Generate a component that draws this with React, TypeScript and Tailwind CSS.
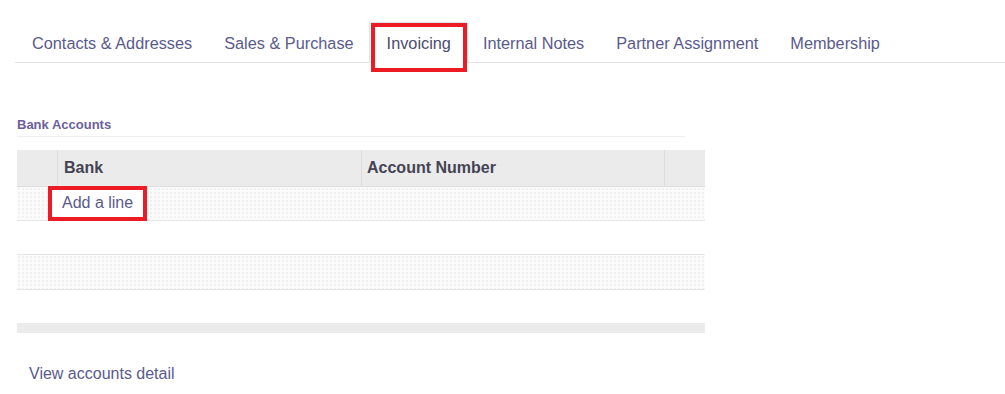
import React from 'react';

const tabs = ['Contacts & Addresses', 'Sales & Purchase', 'Invoicing', 'Internal Notes', 'Partner Assignment', 'Membership'];

const stripe = 'bg-[#fbfbfb] bg-[radial-gradient(#f0f0f0_0.8px,transparent_0.9px)] bg-[length:4px_4px]';

const App: React.FC = () => {
  return (
    <div className="w-[1005px] h-[394px] bg-white font-['Liberation_Sans',Arial,sans-serif] overflow-hidden">
      <div className="pt-[22px] pl-[15px]">
        <div className="flex border-b border-[#dee2e6] h-[41px] pl-px">
          {tabs.map((t) => {
            const active = t === 'Invoicing';
            return (
              <div
                key={t}
                className={
                  active
                    ? 'relative -mb-px -mx-px pl-[17px] pr-[16px] pt-[2px] flex items-center border border-[#dee2e6] border-b-white bg-white rounded-t-[3px] text-[16.3px] text-[#4c4c6e]'
                    : 'px-[16px] pt-[2px] flex items-center text-[16.3px] text-[#5a5a8c]'
                }
              >
                {t}
                {active && <div className="absolute left-[1px] right-0 top-0 h-[49px] border-[4px] border-[#ed1c24]" />}
              </div>
            );
          })}
        </div>
      </div>

      <div className="pl-[17px] pt-[52px]">
        <div className="w-[668px] border-b border-[#eeeeee] pb-[1px] text-[13px] font-bold text-[#6b5f9e]">Bank Accounts</div>

        <div className="w-[688px] mt-[13px]">
          <div className="flex h-[37px] bg-[#ebebeb] border-b border-[#dcdcdc] text-[16px] font-bold text-[#444454]">
            <div className="w-[41px] border-r border-[#dcdcdc]" />
            <div className="w-[304px] border-r border-[#dcdcdc] flex items-center pl-[6px]">Bank</div>
            <div className="w-[303px] border-r border-[#dcdcdc] flex items-center pl-[5px]">Account Number</div>
            <div className="flex-1" />
          </div>
          <div className={`h-[34px] ${stripe} border-b border-[#e6e6e6] flex items-center pl-[31px]`}>
            <div className="border-[4px] border-[#ed1c24] h-[35px] px-[10px] flex items-center text-[16px] text-[#5a5a8c] bg-white">Add a line</div>
          </div>
          <div className="h-[34px] bg-white border-b border-[#e6e6e6]" />
          <div className={`h-[35px] ${stripe} border-b border-[#e6e6e6]`} />
          <div className="h-[33px] bg-white" />
          <div className="h-[10px] bg-[#ebebeb]" />
        </div>

        <div className="pl-[12px] pt-[29px] text-[16px] text-[#5a5a8c]">View accounts detail</div>
      </div>
    </div>
  );
};

export default App;
